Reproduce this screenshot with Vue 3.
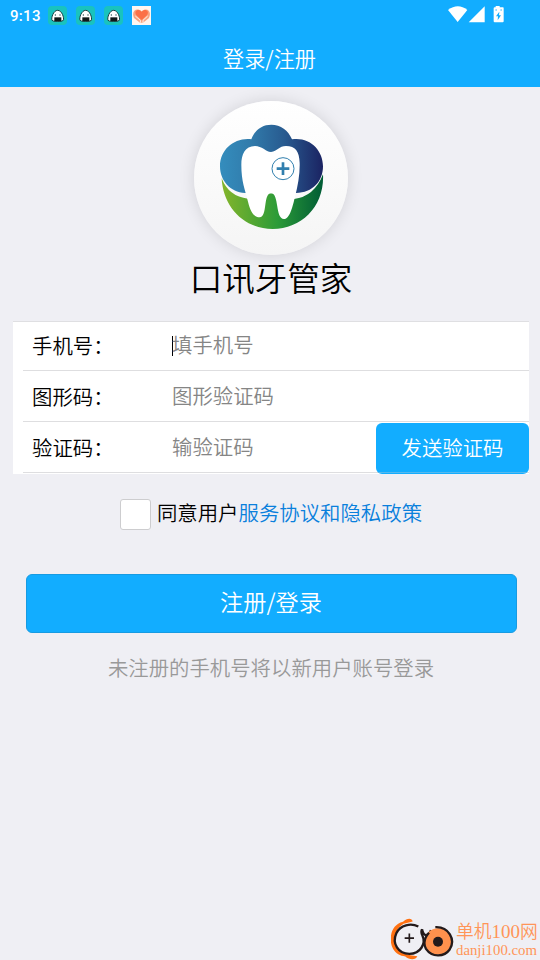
<script setup>
import { ref } from 'vue'

const notices = [1, 2, 3]
const phone = ref('')
const captcha = ref('')
const code = ref('')
const agreed = ref(false)
</script>

<template>
  <div class="screen">
    <header class="top">
      <div class="status">
        <span class="clock">9:13</span>
        <svg v-for="n in notices" :key="n" class="notice" viewBox="0 0 57 57">
          <rect width="57" height="57" rx="12" fill="#19c3be" />
          <path d="M12 43C9 36 16 13 29 13S49 36 46 43Q45 46 29 46T12 43Z" fill="#fff" stroke="#173f42" stroke-width="3" />
          <path d="M19 34h21v12H19z" fill="#101818" />
          <path d="M22 25v4M36 25v4" stroke="#173f42" stroke-width="3" />
        </svg>
        <svg class="heart" viewBox="0 0 57 57">
          <rect width="57" height="57" fill="#fff6f0" />
          <path d="M6 36C-4 13 16 3 29 16C42 3 61 13 51 36L33 50H24Z" fill="#f9a27f" />
          <path d="M29 42L13 28C4 15 19 6 29 18C39 6 54 15 45 28Z" fill="#fb7047" />
          <path d="M10 30L25 43V50M47 30L33 43V50" fill="none" stroke="#fff4ec" stroke-width="3" />
        </svg>
        <svg class="signals" viewBox="0 0 180 60">
          <path d="M0 12Q30-10 58 12L29 48Z" fill="#fff" />
          <path d="M62 49L110 1V49Z" fill="#fff" />
          <path d="M143 0h12v4h10q2 0 2 3v39q0 3-3 3h-24q-3 0-3-3V7q0-3 3-3h3z" fill="#fff" />
          <path d="M154 17l-10 14h6l-1 12 10-15h-6z" fill="#12adff" />
          <path d="M142 10h5v4h-5zM157 10h5v4h-5z" fill="#7fd1fb" />
        </svg>
      </div>
      <h1 class="title">登录/注册</h1>
    </header>

    <main class="content">
      <div class="logo">
        <svg viewBox="42 33 462 462">
          <defs>
            <linearGradient id="petals" gradientUnits="userSpaceOnUse" x1="120" y1="0" x2="429" y2="0">
              <stop offset="0" stop-color="#348dbd" />
              <stop offset=".3" stop-color="#317bab" />
              <stop offset=".62" stop-color="#285b90" />
              <stop offset="1" stop-color="#1b2362" />
            </linearGradient>
            <linearGradient id="bowl" gradientUnits="userSpaceOnUse" x1="125" y1="0" x2="429" y2="0">
              <stop offset="0" stop-color="#84b52b" />
              <stop offset=".55" stop-color="#2c9b38" />
              <stop offset="1" stop-color="#005c35" />
            </linearGradient>
          </defs>
          <path d="M214 148C224 120 246 104 274 104S325 121 336 148C389 140 429 180 429 229C429 273 398 309 348 309H195C151 307 120 272 120 229C120 178 164 142 214 148Z" fill="url(#petals)" />
          <path d="M125 265Q146 320 204 326L246 310H300L342 327Q403 320 429 253C434 348 366 417 278 417C191 417 129 350 125 265Z" fill="url(#bowl)" />
          <path d="M273 186C257 185 246 168 225 168C195 168 184 193 184 224C184 276 195 296 204 335C211 365 222 382 239 382C263 382 249 310 273 310C298 310 285 387 312 387C330 387 339 345 345 320C354 286 360 250 359 218C358 184 346 168 318 168C297 168 292 184 273 186Z" fill="#fff" />
          <circle cx="309" cy="236" r="33" fill="#fff" stroke="#317fae" stroke-width="3" />
          <path d="M309 217v38M290 236h38" stroke="#317fae" stroke-width="8" />
        </svg>
      </div>
      <h2 class="name">口讯牙管家</h2>

      <form class="form" @submit.prevent>
        <label class="row">
          <span class="label">手机号：</span>
          <span class="field focused"><input v-model="phone" placeholder="填手机号" /></span>
        </label>
        <label class="row">
          <span class="label">图形码：</span>
          <span class="field"><input v-model="captcha" placeholder="图形验证码" /></span>
        </label>
        <div class="row last">
          <span class="label">验证码：</span>
          <span class="field"><input v-model="code" placeholder="输验证码" /></span>
          <button class="send" type="button">发送验证码</button>
        </div>
      </form>

      <label class="agree">
        <input v-model="agreed" class="box" type="checkbox" />
        <span class="terms">同意用户<a>服务协议和隐私政策</a></span>
      </label>
      <button class="submit" type="button">注册/登录</button>
      <p class="hint">未注册的手机号将以新用户账号登录</p>
    </main>

    <footer class="mark">
      <svg class="markicon" viewBox="0 0 192 125">
        <path d="M65 10C63-2 47 0 36 11C-2 20-8 66 6 92C15 108 27 113 43 115C55 126 75 126 79 114C50 113 29 102 18 86C7 64 10 34 38 17Z" fill="#ff7112" />
        <path d="M82 25C60 14 28 20 16 45C2 76 22 107 55 107C88 107 106 77 94 51Q89 41 93 33M93 33Q97 50 105 51Q115 50 120 36" fill="none" stroke="#231a1b" stroke-width="7" />
        <circle cx="141" cy="70" r="40" fill="#ff914d" />
        <path d="M114 44Q92 68 105 92C123 118 159 118 176 94C195 64 173 25 133 27" fill="none" stroke="#231a1b" stroke-width="7" />
        <circle cx="141" cy="71" r="15" fill="#231a1b" />
        <path d="M55 46v28M41 60h28" stroke="#231a1b" stroke-width="5" />
      </svg>
      <div class="marktext">
        <span class="cn">单机<span class="digits">100</span>网</span>
        <span class="url">danji100.com</span>
      </div>
    </footer>
  </div>
</template>

<style>
body {
  background: #efeff4;
}
</style>

<style scoped>
.screen {
  width: 540px;
  height: 960px;
  box-sizing: border-box;
  display: flex;
  flex-direction: column;
  overflow: hidden;
  background: #efeff4;
  color: #000;
  font-family: "Noto Sans CJK SC", sans-serif;
  font-size: 20.4px;
  font-weight: 350;
}
.top {
  height: 87px;
  flex: none;
  background: #12adff;
  color: #fff;
}
.status {
  height: 31px;
  display: flex;
  align-items: center;
  padding-left: 10px;
}
.clock {
  width: 38px;
  font: 500 15px/31px Roboto, sans-serif;
  letter-spacing: 0.3px;
  padding-top: 1px;
}
.notice {
  width: 19px;
  height: 19px;
  margin-right: 9px;
}
.heart {
  width: 19px;
  height: 19px;
}
.signals {
  width: 60px;
  height: 20px;
  margin: 1px 0 0 297px;
}
.title {
  margin: 0 0 0 -1px;
  font-size: 21.2px;
  font-weight: 350;
  line-height: 54px;
  text-align: center;
}
.content {
  flex: 1;
  display: flex;
  flex-direction: column;
  align-items: center;
  padding-top: 14px;
}
.logo {
  width: 154px;
  height: 154px;
  flex: none;
  margin-left: 2px;
  border-radius: 50%;
  background: linear-gradient(#fff, #f5f5f5);
  box-shadow: 0 0 16px rgba(0, 0, 0, 0.12);
}
.logo svg {
  display: block;
}
.name {
  margin: 0 0 0 2px;
  height: 66px;
  font-size: 32.5px;
  font-weight: 350;
  line-height: 44px;
}
.form {
  width: 516px;
  box-sizing: border-box;
  height: 153px;
  flex: none;
  margin-left: 2px;
  padding-left: 10px;
  border-top: 1px solid #dfdfe2;
  background: #fff;
}
.row {
  height: 51px;
  box-sizing: border-box;
  display: flex;
  align-items: center;
  padding-left: 9px;
  border-bottom: 1px solid #dedee0;
}
.row:first-child {
  height: 49px;
}
.row:first-child .label {
  margin-bottom: 3px;
}
.row:first-child input {
  margin-bottom: 5px;
}
.label {
  width: 140px;
  line-height: 46px;
}
.field {
  flex: 1;
  min-width: 0;
  height: 48px;
  display: flex;
  align-items: center;
}
.field input {
  width: 100%;
  min-width: 0;
  height: 46px;
  padding: 0;
  margin-bottom: 2px;
  border: 0;
  outline: 0;
  background: transparent;
  font: inherit;
}
.field input::placeholder {
  color: #858585;
}
.focused::before {
  content: "";
  width: 1px;
  height: 20px;
  margin-right: -1px;
  background: #000;
}
.send {
  width: 153px;
  height: 51px;
  flex: none;
  align-self: flex-start;
  margin-top: 1px;
  padding: 0 0 4px;
  border: 0;
  border-radius: 6px;
  background: linear-gradient(#12adff 49px, #55b9ee 49px, #55b9ee 50px, #12adff 50px);
  color: #fff;
  font: inherit;
}
.agree {
  height: 31px;
  display: flex;
  margin: 25px 0 0 2px;
}
.box {
  appearance: none;
  width: 31px;
  height: 31px;
  box-sizing: border-box;
  margin: 0 6px 0 0;
  border: 1px solid #cdcdcf;
  border-radius: 3px;
  background: #fff;
}
.terms {
  line-height: 26px;
}
.terms a {
  color: #0a80dc;
}
.submit {
  width: 491px;
  height: 59px;
  flex: none;
  margin: 44px 0 0 3px;
  padding: 0 1px 5px 0;
  border: 1px solid #179be2;
  border-radius: 6px;
  background: #12adff;
  color: #fff;
  font: 350 23.2px "Noto Sans CJK SC", sans-serif;
}
.hint {
  margin: 19px 0 0 2px;
  color: #999;
  line-height: 30px;
}
.mark {
  height: 42px;
  flex: none;
  display: flex;
  justify-content: flex-end;
}
.markicon {
  width: 64px;
  height: 42px;
}
.marktext {
  width: 84px;
  margin-left: 1px;
  display: flex;
  flex-direction: column;
  color: #ff9558;
  white-space: nowrap;
}
.cn {
  font-size: 17.8px;
  line-height: 24px;
}
.digits {
  font-family: "Liberation Serif", serif;
  font-size: 19px;
}
.url {
  font-family: "Liberation Serif", serif;
  font-size: 14.8px;
  line-height: 13px;
}
</style>
